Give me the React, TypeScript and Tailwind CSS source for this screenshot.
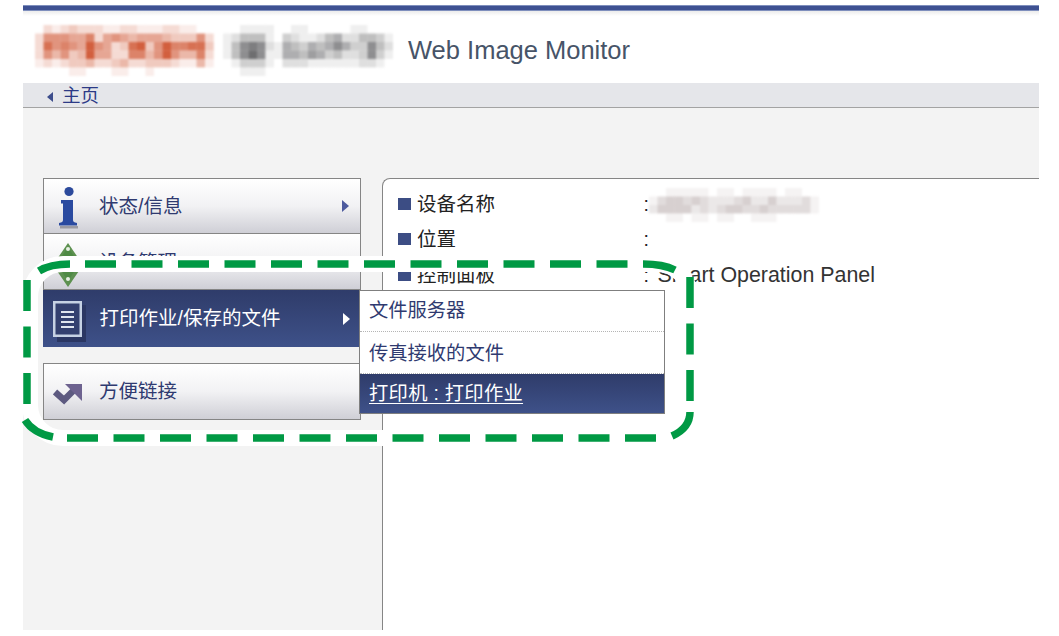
import React from "react";

const RED = ["021232221122111221100","266655725654555433362","286765965238936977883","264634955227746964472","121233422342233321141","000011000110010000000"];
const GREY = ["00111100110000011000","12444103211245224431","14787215435457533742","14797115546534223731","01333102221111112210","00111000000000000000"];
const NAME = ["00111110110111101100","13443432223422422231","24444232344334333331","00110110110011100000"];

function Mosaic({ rows, from, to, cell, className }: { rows: string[]; from: number[]; to: number[]; cell: number; className: string }) {
  const w = rows[0].length * cell;
  const h = rows.length * cell;
  return (
    <svg width={w} height={h} viewBox={`0 0 ${w} ${h}`} className={className} aria-hidden="true">
      {rows.map((r, y) =>
        r.split("").map((c, x) => {
          const t = Number(c) / 9;
          const col = from.map((f, i) => Math.round(f + (to[i] - f) * t));
          return <rect key={`${x}-${y}`} x={x * cell} y={y * cell} width={cell + 0.3} height={cell + 0.3} fill={`rgb(${col.join(",")})`} />;
        })
      )}
    </svg>
  );
}

function InfoIcon() {
  return (
    <svg width="26" height="44" viewBox="0 0 26 44" className="mt-[3px]" aria-hidden="true">
      <circle cx="14" cy="5.500" r="4.600" fill="#2c4a9c" />
      <path d="M6 14h12v20c0 1.500 1 2.500 4 3v2.500H4V37c3-.5 4-1.500 4-3V17.500H6z" fill="#2a4aa0" />
      <rect x="5" y="40" width="18" height="2.500" fill="#9a9aa2" />
    </svg>
  );
}

function DiamondIcon() {
  return (
    <svg width="32" height="46" viewBox="0 0 32 46" className="mt-[6px]" aria-hidden="true">
      <path d="M16 1 31 23 16 45 1 23z" fill="#5d9150" />
      <path d="M16 5 27 22 16 39 5 22z" fill="#4f8a45" />
      <circle cx="16" cy="7" r="2" fill="#e8f0e4" />
      <circle cx="16" cy="37" r="2" fill="#e8f0e4" />
    </svg>
  );
}

function DocIcon() {
  return (
    <svg width="33" height="41" viewBox="0 0 33 41" aria-hidden="true">
      <rect x="4" y="4" width="29" height="37" fill="#2b3763" />
      <rect x="1.250" y="1.250" width="26.500" height="33.500" fill="#33406f" stroke="#c6d2e4" strokeWidth="2.500" />
      <path d="M8 11h13M8 16h13M8 21h13M8 26h13" stroke="#dfe5ef" strokeWidth="2" />
    </svg>
  );
}

function LinkIcon() {
  return (
    <svg width="30" height="22" viewBox="0 0 30 22" className="mt-[5px]" aria-hidden="true">
      <path d="M2 9l9 8L23 5" fill="none" stroke="#5d5a80" strokeWidth="6.500" />
      <path d="M12 1h17v17z" fill="#6d628f" />
    </svg>
  );
}

function Arrow({ light }: { light?: boolean }) {
  return (
    <svg width="7" height="12" viewBox="0 0 7 12" className="absolute right-[11px] top-1/2 -translate-y-1/2" aria-hidden="true">
      <path d="M0 0l7 6-7 6z" fill={light ? "#ffffff" : "#4d5a9e"} />
    </svg>
  );
}

const light = "bg-gradient-to-b from-[#ffffff] via-[#f2f2f4] to-[#cfcfd6] text-[#2f3a70] border-[#858585]";

function MenuItem({ icon, label, arrow, className }: { icon: React.ReactNode; label: string; arrow?: boolean; className: string }) {
  return (
    <div className={`relative flex items-center border-[1.5px] pl-[55px] ${className}`}>
      <div className="absolute left-[8px] top-0 bottom-0 flex w-[32px] items-center justify-center">{icon}</div>
      <span>{label}</span>
      {arrow && <Arrow />}
    </div>
  );
}

function Row({ label, value }: { label: string; value?: React.ReactNode }) {
  return (
    <div className="flex h-[35.500px] items-center">
      <span className="-mt-[1px] h-[12px] w-[13px] bg-[#3c4d84]" />
      <span className="ml-[6px] w-[226.500px] text-[#222222]">{label}</span>
      <span className="text-[#222222]">:</span>
      <span className="ml-[8.500px] text-[#333333]">{value}</span>
    </div>
  );
}

export default function App() {
  return (
    <div className="relative h-[636px] w-[1059px] overflow-hidden bg-white pb-[6px] pl-[23px] pr-[20px] pt-[5px] font-['Liberation_Sans','Noto_Sans_CJK_SC',sans-serif] text-[19.500px] leading-none">
      <div className="flex h-full flex-col">
        <div className="h-[6px] border-y border-y-[#7f8fbd] bg-[#3e5192]" />
        <div className="h-[5px] bg-gradient-to-b from-[#ececec] to-white" />
        <header className="relative flex h-[67px] items-center pl-[385px] pt-[3px]">
          <Mosaic rows={RED} from={[255, 255, 255]} to={[210, 95, 62]} cell={8.5} className="absolute left-[12px] top-[9px] blur-[1px]" />
          <Mosaic rows={GREY} from={[255, 255, 255]} to={[110, 110, 112]} cell={8.5} className="absolute left-[200px] top-[9px] blur-[1px]" />
          <span className="text-[25.500px] text-[#475468]">Web Image Monitor</span>
        </header>
        <nav className="flex h-[25px] shrink-0 items-center border-b-[1.5px] border-b-[#a3a3a3] bg-[#e5e6ea] pl-[24px] text-[18.500px] text-[#2c3a86]">
          <svg width="6" height="10" viewBox="0 0 6 10" className="mr-[9px] mt-[3px]" aria-hidden="true">
            <path d="M6 0v10L0 5z" fill="#3d4d8c" />
          </svg>
          <span className="pt-[3px]">主页</span>
        </nav>
        <main className="flex min-h-0 flex-1 bg-[#f3f3f3] pl-[20px] pt-[70px]">
          <div className="relative w-[318px] shrink-0">
            <MenuItem className={`h-[56px] pt-[1px] ${light}`} icon={<InfoIcon />} label="状态/信息" arrow />
            <MenuItem className={`-mt-[1px] h-[57px] pt-[2px] ${light}`} icon={<DiamondIcon />} label="设备管理" />
            <div className="relative flex h-[57px] items-center bg-gradient-to-b from-[#2f3c6a] to-[#3e5189] pl-[56.500px] text-white">
              <div className="absolute left-[10px] top-[11px]"><DocIcon /></div>
              <span>打印作业/保存的文件</span>
              <Arrow light />
              <div className="absolute left-[316px] top-0 z-10 w-[306px] border-[1.5px] border-[#7f7f7f] bg-white text-[19.300px] text-[#2f3a70]">
                <div className="flex h-[41px] items-center border-b border-dotted border-b-[#b5b5b5] pl-[9px]">文件服务器</div>
                <div className="flex h-[41.500px] items-center border-b border-dotted border-b-[#b5b5b5] pl-[9px] pt-[2px]">传真接收的文件</div>
                <div className="flex h-[39.500px] items-center bg-gradient-to-b from-[#2f3c6a] to-[#3e5189] pl-[9px] pt-[1px] tracking-[0.3px] text-white underline underline-offset-[3px]">打印机 : 打印作业</div>
              </div>
            </div>
            <MenuItem className={`mt-[16px] h-[57px] ${light}`} icon={<LinkIcon />} label="方便链接" />
          </div>
          <section className="relative ml-[21px] flex-1 rounded-tl-[8px] border-l-[1.5px] border-t-[1.5px] border-[#858585] bg-white pl-[15px] pt-[7.500px]">
            <Row label="设备名称" />
            <Row label="位置" />
            <Row label="控制面板" value={<span className="text-[21.400px]">Smart Operation Panel</span>} />
            <Mosaic rows={NAME} from={[255, 255, 255]} to={[165, 150, 150]} cell={8.5} className="absolute left-[266px] top-[9px] blur-[1px]" />
          </section>
        </main>
      </div>
      <svg className="pointer-events-none absolute left-0 top-0 z-20" width="1059" height="636" viewBox="0 0 1059 636" fill="none" aria-hidden="true">
        <rect x="30" y="264" width="660" height="174" rx="33" stroke="#ffffff" strokeWidth="16" />
        <g stroke="#009944" strokeWidth="7.500">
          <path d="M85 264H628" strokeDasharray="31 15.500" />
          <path d="M67 438H657" strokeDasharray="31 15.500" />
          <path d="M27 280V404" strokeDasharray="31 15.500" />
          <path d="M690 277V402" strokeDasharray="31 15.500" />
          <path d="M39 271Q50 264 70 264" />
          <path d="M25 420Q33 433 53 437" />
          <path d="M643 264Q663 264 675 270" />
          <path d="M690 412Q690 428 672 436" />
        </g>
      </svg>
    </div>
  );
}
